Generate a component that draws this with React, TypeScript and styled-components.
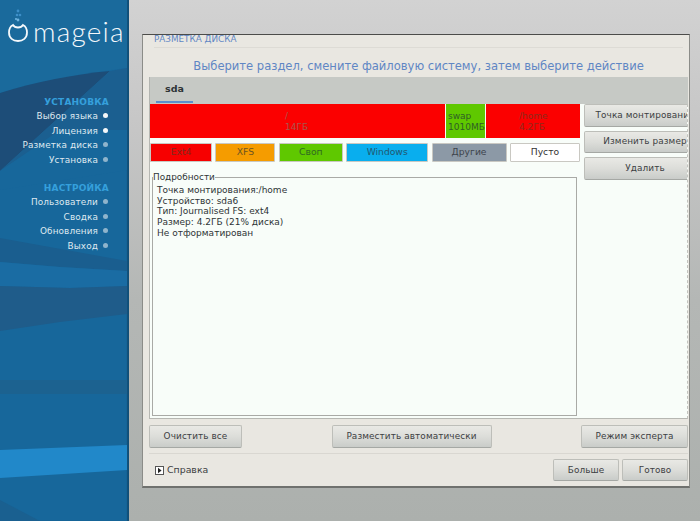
import styled, { createGlobalStyle } from "styled-components";

const FONT = '"DejaVu Sans", Verdana, sans-serif';
const BLUE = "#5f86c4";

const installSteps = [
  { label: "Выбор языка", done: true },
  { label: "Лицензия", done: true },
  { label: "Разметка диска", done: false },
  { label: "Установка", done: false },
];
const setupSteps = ["Пользователи", "Сводка", "Обновления", "Выход"];

const legend = [
  { label: "Ext4", bg: "#f70000", fg: "#7d2a1e", width: 62 },
  { label: "XFS", bg: "#f59c00", fg: "#6e5420", width: 60 },
  { label: "Своп", bg: "#5fc800", fg: "#2f6a22", width: 64 },
  { label: "Windows", bg: "#09aeee", fg: "#22586f", width: 82 },
  { label: "Другие", bg: "#8c99a6", fg: "#3d444c", width: 75 },
  { label: "Пусто", bg: "#ffffff", fg: "#333", width: 70 },
];

const details = [
  "Точка монтирования:/home",
  "Устройство: sda6",
  "Тип: Journalised FS: ext4",
  "Размер: 4.2ГБ (21% диска)",
  "Не отформатирован",
];

const Global = createGlobalStyle`
  html, body {
    margin: 0;
    padding: 0;
    height: 100%;
    overflow: hidden;
  }
  body {
    font-family: ${FONT};
  }
`;

const Page = styled.div`
  width: 700px;
  height: 521px;
  display: grid;
  grid-template-columns: 129px 1fr;
  overflow: hidden;
  background: linear-gradient(180deg, #d2d2d2 0, #c6c6c6 130px, #b4b7b5 300px, #acb0ad 521px);
`;

const Sidebar = styled.aside`
  position: relative;
  height: 521px;
  background: #17679b;
  box-shadow: inset -2px 0 1px #114f78;
`;

const Backdrop = styled.svg`
  position: absolute;
  inset: 0;
  width: 127px;
  height: 521px;
`;

const Logo = styled.div`
  position: relative;
  display: flex;
  align-items: flex-start;
  height: 46px;
  padding: 9px 0 0 7px;
  gap: 2px;
`;

const LogoWord = styled.span`
  font: 300 28px/1 Lato, "Open Sans", sans-serif;
  letter-spacing: 1.2px;
  color: #f4f8fb;
  margin-top: 8px;
`;

const Nav = styled.nav`
  position: relative;
  margin-top: 40px;
  display: flex;
  flex-direction: column;
  align-items: flex-end;
  padding-right: 20px;
`;

const NavHeading = styled.div<{ $gap?: number }>`
  height: 14px;
  margin-top: ${({ $gap }) => $gap ?? 0}px;
  font: 700 9px/14px ${FONT};
  letter-spacing: 0.2px;
  color: #35a0dc;
  text-align: right;
`;

const NavItem = styled.div`
  position: relative;
  height: 14.5px;
  margin-right: 11px;
  font: 400 8.9px/14.5px ${FONT};
  letter-spacing: 0.1px;
  color: #dfe9f0;
  white-space: nowrap;
`;

const Bullet = styled.i<{ $on: boolean }>`
  position: absolute;
  right: -10px;
  top: 4px;
  width: 5px;
  height: 5px;
  border-radius: 50%;
  background: ${({ $on }) => ($on ? "#f4f7f9" : "#8fb4cc")};
`;

const Dialog = styled.main`
  width: 548px;
  height: 454px;
  margin: 34px 0 0 13px;
  box-sizing: border-box;
  display: flex;
  flex-direction: column;
  padding: 0 1px 0 6px;
  background: #e9e7e1;
  border: 1px solid #8b8c88;
  border-top-color: #4c4c4a;
  border-bottom: 2px solid #6f716e;
  overflow: hidden;
`;

const Title = styled.div`
  height: 12px;
  margin: 0 5px 0 5px;
  font: 400 8.8px/8px ${FONT};
  color: ${BLUE};
  border-bottom: 1px solid #dddbd5;
`;

const Heading = styled.h1`
  margin: 0;
  height: 29px;
  font: 400 11.55px/36px ${FONT};
  color: ${BLUE};
  text-align: center;
`;

const Tabs = styled.div`
  height: 27px;
  flex: none;
  box-sizing: border-box;
  padding-left: 6px;
  background: #c6c9c5;
  border-left: 1px solid #b2b4b0;
`;

const Tab = styled.div`
  width: 37px;
  height: 26px;
  box-sizing: border-box;
  border-bottom: 2px solid #5b8fce;
  font: 700 9.5px/24px ${FONT};
  color: #2e3436;
  text-align: center;
`;

const TabPage = styled.section`
  height: 315px;
  flex: none;
  box-sizing: border-box;
  display: grid;
  grid-template-columns: 430px minmax(0, 1fr);
  column-gap: 4px;
  overflow: hidden;
  background: #f8fdf9;
  border: 1px solid #b6b7b2;
  border-top: 0;
  border-right: 1px dashed #c2c3be;
`;

const LeftColumn = styled.div`
  display: flex;
  flex-direction: column;
  min-width: 0;
`;

const Bar = styled.div`
  height: 34px;
  display: flex;
  gap: 1px;
`;

const Part = styled.div<{ $bg: string; $grow: number; $fg: string; $pad: number }>`
  width: ${({ $grow }) => $grow}px;
  box-sizing: border-box;
  padding: 7px 0 0 ${({ $pad }) => $pad}px;
  background: ${({ $bg }) => $bg};
  color: ${({ $fg }) => $fg};
  font: 400 9px/10.5px ${FONT};
  white-space: nowrap;
`;

const Legend = styled.div`
  display: flex;
  justify-content: space-between;
  margin-top: 5px;
  height: 19px;
`;

const Swatch = styled.div<{ $bg: string; $fg: string; $w: number }>`
  width: ${({ $w }) => $w}px;
  flex: none;
  box-sizing: border-box;
  background: ${({ $bg }) => $bg};
  color: ${({ $fg }) => $fg};
  border: 1px solid #c9c8c2;
  border-radius: 1px;
  font: 400 9.2px/15px ${FONT};
  text-align: center;
`;

const Frame = styled.fieldset`
  margin: 9px 0 0 2px;
  width: 425px;
  height: 245px;
  box-sizing: border-box;
  padding: 2px 0 0 4px;
  border: 1px solid #a9aaa6;
  border-radius: 0;
  min-inline-size: 0;
`;

const FrameLabel = styled.legend`
  padding: 0;
  margin-left: -4px;
  font: 400 8.9px/12px ${FONT};
  color: #2e3436;
`;

const Line = styled.div`
  font: 400 9px/10.7px ${FONT};
  color: #2e3436;
`;

const Side = styled.div`
  display: flex;
  flex-direction: column;
  gap: 4px;
  min-width: 0;
`;

const Button = styled.button<{ $w?: number; $h?: number }>`
  width: ${({ $w }) => ($w ? `${$w}px` : "100%")};
  height: ${({ $h }) => $h ?? 23}px;
  flex: none;
  padding: 0;
  box-sizing: border-box;
  border: 1px solid #bdbeb9;
  border-bottom-color: #a5a8a4;
  border-radius: 2px;
  background: linear-gradient(180deg, #e9e9e5 0%, #dcddd9 50%, #c9ccc9 100%);
  color: #3c4042;
  font: 400 8.9px/1 ${FONT};
  letter-spacing: 0.1px;
  white-space: nowrap;
  text-align: center;
`;

const ActionRow = styled.div`
  display: flex;
  justify-content: space-between;
  margin-top: 6px;
  height: 23px;
  flex: none;
`;

const Separator = styled.div`
  height: 1px;
  flex: none;
  margin-top: 5px;
  background: #d9d7d1;
`;

const FootRow = styled.div`
  display: flex;
  align-items: center;
  margin-top: 5px;
  height: 22px;
  flex: none;
`;

const Help = styled.div`
  display: flex;
  align-items: center;
  gap: 3px;
  margin-left: 6px;
  margin-right: auto;
  font: 400 9.4px/1 ${FONT};
  color: #3c4042;
`;

const HelpIcon = styled.svg`
  width: 9px;
  height: 9px;
  flex: none;
`;

const FootButtons = styled.div`
  display: flex;
  gap: 3px;
`;

export default function App() {
  return (
    <Page>
      <Global />
      <Sidebar>
        <Backdrop viewBox="0 0 127 521" aria-hidden="true">
          <path d="M0 0H127V68C80 74 35 82 0 93Z" fill="#1a6a9c" />
          <path d="M0 93C35 82 75 74 110 71L0 171Z" fill="#1d4d78" />
          <path d="M110 71L127 68V130L62 130L0 171Z" fill="#1b5f90" />
          <path d="M0 171L60 130H127V170L0 190Z" fill="#17679b" opacity="0.9" />
          <path d="M0 238L127 261V271L60 267L0 262Z" fill="#1a5e8f" />
          <path d="M0 262L60 267L127 271V286L70 288L0 286Z" fill="#1a6ca3" />
          <path d="M0 286L70 288L127 286V314L60 322L0 331Z" fill="#1f5c8a" />
          <path d="M0 380H127V394H0Z" fill="#1c6290" />
          <path d="M0 450L127 445V470L0 478Z" fill="#2188c9" />
          <path d="M0 500L40 521H0Z" fill="#1a6090" />
        </Backdrop>
        <Logo>
          <svg width="24" height="34" viewBox="0 0 24 34" aria-hidden="true" style={{ position: "relative" }}>
            <circle cx="11" cy="2" r="1.4" fill="#3d8fc8" />
            <circle cx="10" cy="6" r="1.3" fill="#3d8fc8" />
            <circle cx="13" cy="6" r="1.3" fill="#3d8fc8" />
            <circle cx="11" cy="11" r="1.4" fill="#6db3de" />
            <circle cx="9" cy="10" r="1.1" fill="#6db3de" />
            <path
              d="M6 16C3 17.500 2 20 2 23.500C2 29 6 32 11 32C16 32 20 29 20 23.500C20 20 19 17.500 16 16C15 17.700 13.200 18.500 11 18.500C8.800 18.500 7 17.700 6 16Z"
              fill="none"
              stroke="#f4f8fb"
              strokeWidth="1.800"
            />
          </svg>
          <LogoWord>mageia</LogoWord>
        </Logo>
        <Nav>
          <NavHeading>УСТАНОВКА</NavHeading>
          {installSteps.map((step) => (
            <NavItem key={step.label}>
              {step.label}
              <Bullet $on={step.done} />
            </NavItem>
          ))}
          <NavHeading $gap={14}>НАСТРОЙКА</NavHeading>
          {setupSteps.map((label) => (
            <NavItem key={label}>
              {label}
              <Bullet $on={false} />
            </NavItem>
          ))}
        </Nav>
      </Sidebar>
      <Dialog>
        <Title>РАЗМЕТКА ДИСКА</Title>
        <Heading>Выберите раздел, смените файловую систему, затем выберите действие</Heading>
        <Tabs>
          <Tab>sda</Tab>
        </Tabs>
        <TabPage>
          <LeftColumn>
            <Bar>
              <Part $bg="#fb0000" $grow={295} $fg="#a8564c" $pad={135}>
                /
                <br />
                14ГБ
              </Part>
              <Part $bg="#5fc800" $grow={39} $fg="#2f5f26" $pad={2}>
                swap
                <br />
                1010МБ
              </Part>
              <Part $bg="#fb0000" $grow={94} $fg="#8f2a1c" $pad={33}>
                /home
                <br />
                4.2ГБ
              </Part>
            </Bar>
            <Legend>
              {legend.map((item) => (
                <Swatch key={item.label} $bg={item.bg} $fg={item.fg} $w={item.width}>
                  {item.label}
                </Swatch>
              ))}
            </Legend>
            <Frame>
              <FrameLabel>Подробности</FrameLabel>
              {details.map((line) => (
                <Line key={line}>{line}</Line>
              ))}
            </Frame>
          </LeftColumn>
          <Side>
            <Button $w={122} $h={22.5}>Точка монтирования</Button>
            <Button $w={122} $h={22.5}>Изменить размер</Button>
            <Button $w={122} $h={22.5}>Удалить</Button>
          </Side>
        </TabPage>
        <ActionRow>
          <Button $w={93}>Очистить все</Button>
          <Button $w={160}>Разместить автоматически</Button>
          <Button $w={107}>Режим эксперта</Button>
        </ActionRow>
        <Separator />
        <FootRow>
          <Help>
            <HelpIcon viewBox="0 0 9 9" aria-hidden="true">
              <rect x="0.5" y="0.5" width="8" height="8" fill="#fff" stroke="#555" />
              <path d="M3 1.800L6.600 4.500L3 7.200Z" fill="#222" />
            </HelpIcon>
            Справка
          </Help>
          <FootButtons>
            <Button $w={66} $h={22}>Больше</Button>
            <Button $w={66} $h={22}>Готово</Button>
          </FootButtons>
        </FootRow>
      </Dialog>
    </Page>
  );
}
